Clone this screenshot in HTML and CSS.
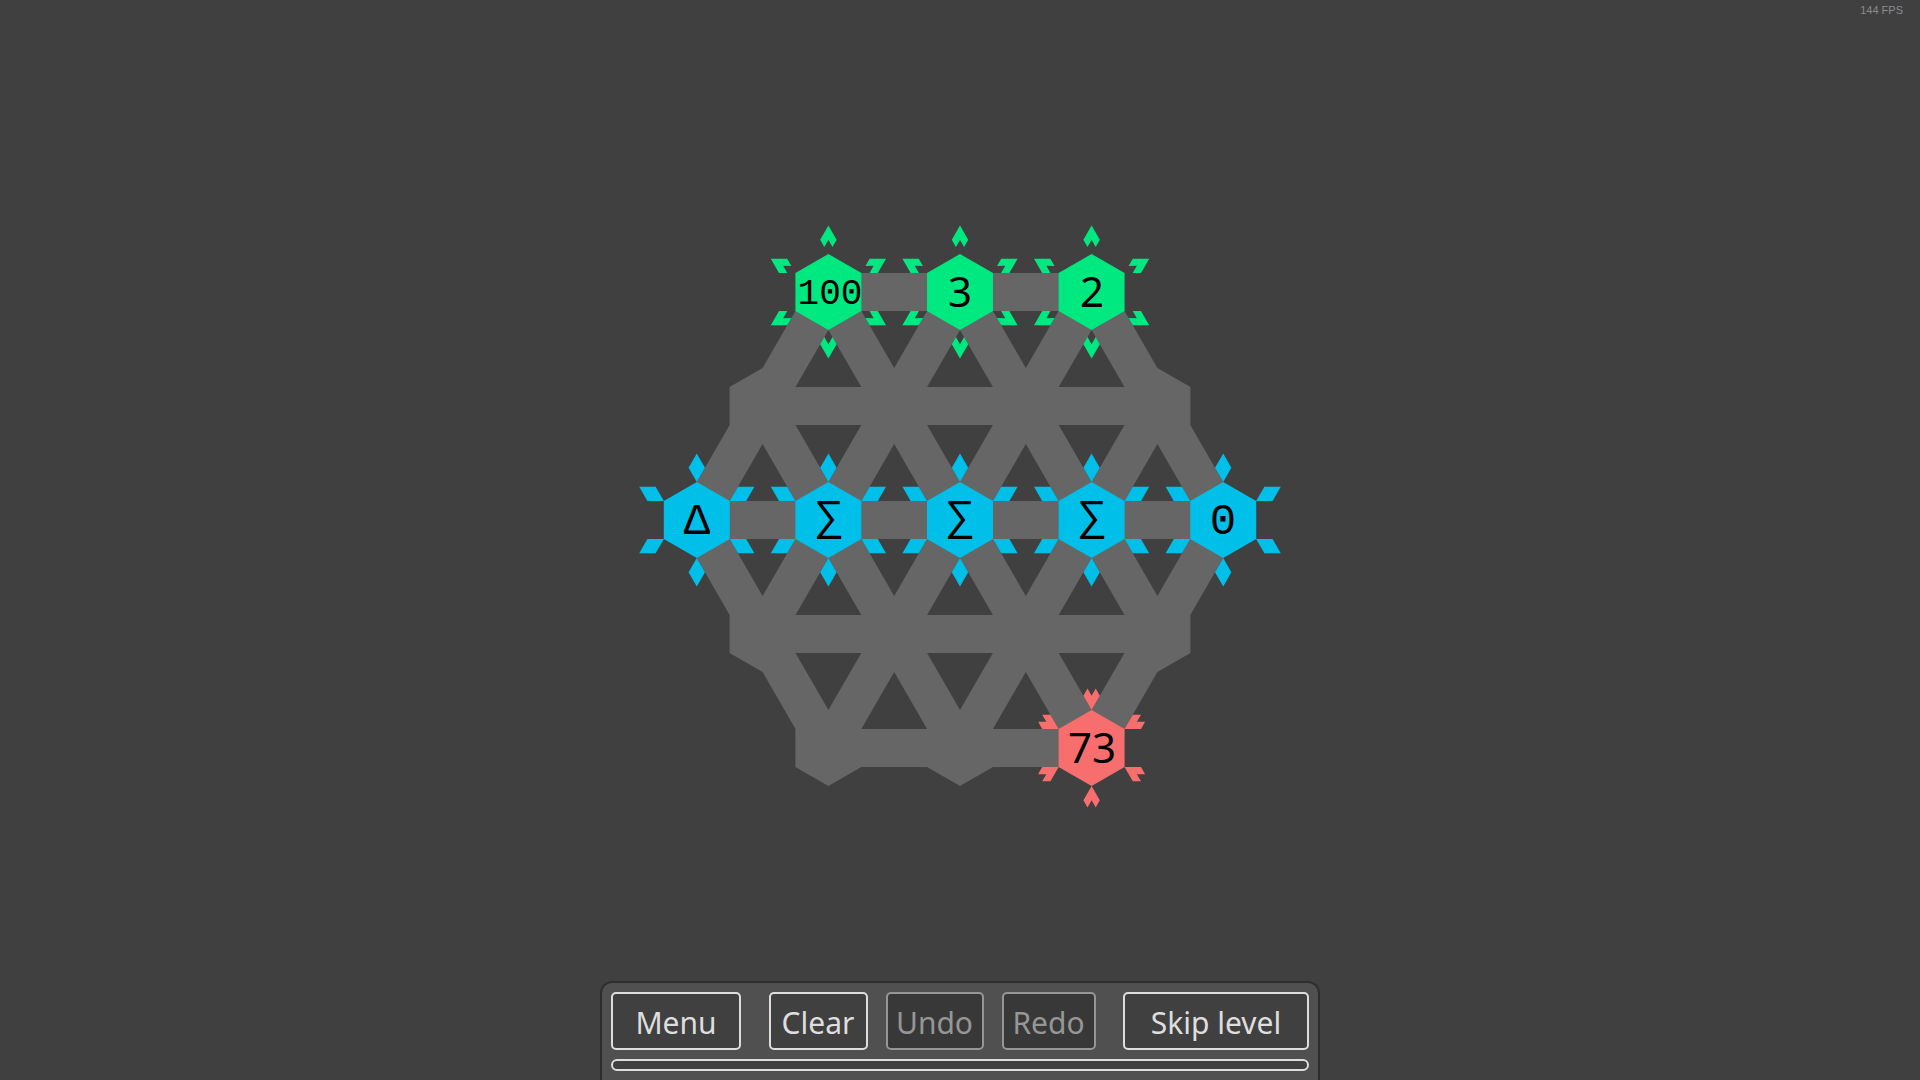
FILE: index.html
```html
<!DOCTYPE html>
<html lang="en">
<head>
    <meta charset="UTF-8">
    <meta name="viewport" content="width=device-width, initial-scale=1.0">
    <title>Hex Puzzle</title>
    <link rel="stylesheet" href="styles.css">
</head>
<body>
    <div class="fps">144 FPS</div>

    <main class="game">
        <svg class="board" viewBox="-330 -300 660 600" role="img" aria-label="Game board">
            <defs>
                <polygon id="hex" points="0,-38 33,-19 33,19 0,38 -33,19 -33,-19"/>

                <!-- one marker per kind of cell, pointing up -->
                <polygon id="arrow-out" points="0,-66.5 8.2,-52.3 4.1,-45.1 0,-52.3 -4.1,-45.1 -8.2,-52.3"/>
                <polygon id="arrow-both" points="0,-66.5 8.2,-52.3 0,-38 -8.2,-52.3"/>
                <polygon id="arrow-in" points="0,-38 8.2,-52.3 4.1,-59.4 0,-52.3 -4.1,-59.4 -8.2,-52.3"/>

                <g id="source">
                    <use href="#hex"/>
                    <use href="#arrow-out"/>
                    <use href="#arrow-out" transform="rotate(60)"/>
                    <use href="#arrow-out" transform="rotate(120)"/>
                    <use href="#arrow-out" transform="rotate(180)"/>
                    <use href="#arrow-out" transform="rotate(240)"/>
                    <use href="#arrow-out" transform="rotate(300)"/>
                </g>
                <g id="operator">
                    <use href="#hex"/>
                    <use href="#arrow-both"/>
                    <use href="#arrow-both" transform="rotate(60)"/>
                    <use href="#arrow-both" transform="rotate(120)"/>
                    <use href="#arrow-both" transform="rotate(180)"/>
                    <use href="#arrow-both" transform="rotate(240)"/>
                    <use href="#arrow-both" transform="rotate(300)"/>
                </g>
                <g id="target">
                    <use href="#hex"/>
                    <use href="#arrow-in"/>
                    <use href="#arrow-in" transform="rotate(60)"/>
                    <use href="#arrow-in" transform="rotate(120)"/>
                    <use href="#arrow-in" transform="rotate(180)"/>
                    <use href="#arrow-in" transform="rotate(240)"/>
                    <use href="#arrow-in" transform="rotate(300)"/>
                </g>
            </defs>

            <!-- paths between the cells -->
            <g class="paths">
                <path d="M-131.6-228H131.6M-197.4-114H197.4M-263.2 0H263.2M-197.4 114H197.4M-131.6 228H131.6"/>
                <path d="M-263.2 0L-131.6-228M-197.4 114L0-228M-131.6 228L131.6-228M0 228L197.4-114M131.6 228L263.2 0"/>
                <path d="M263.2 0L131.6-228M197.4 114L0-228M131.6 228L-131.6-228M0 228L-197.4-114M-131.6 228L-263.2 0"/>
            </g>

            <!-- empty cells -->
            <g class="empty">
                <use href="#hex" x="-197.4" y="-114"/>
                <use href="#hex" x="-65.8" y="-114"/>
                <use href="#hex" x="65.8" y="-114"/>
                <use href="#hex" x="197.4" y="-114"/>
                <use href="#hex" x="-197.4" y="114"/>
                <use href="#hex" x="-65.8" y="114"/>
                <use href="#hex" x="65.8" y="114"/>
                <use href="#hex" x="197.4" y="114"/>
                <use href="#hex" x="-131.6" y="228"/>
                <use href="#hex" x="0" y="228"/>
            </g>

            <g class="sources">
                <use href="#source" x="-131.6" y="-228"/>
                <use href="#source" x="0" y="-228"/>
                <use href="#source" x="131.6" y="-228"/>
            </g>
            <g class="operators">
                <use href="#operator" x="-263.2" y="0"/>
                <use href="#operator" x="-131.6" y="0"/>
                <use href="#operator" x="0" y="0"/>
                <use href="#operator" x="131.6" y="0"/>
                <use href="#operator" x="263.2" y="0"/>
            </g>
            <g class="targets">
                <use href="#target" x="131.6" y="228"/>
            </g>

            <g class="labels">
                <text class="small" x="-130" y="-216">100</text>
                <text x="0" y="-213">3</text>
                <text x="132" y="-213">2</text>
                <text class="mono" x="-263" y="14">Δ</text>
                <text class="sum" x="-131" y="10">∑</text>
                <text class="sum" x="0" y="10">∑</text>
                <text class="sum" x="132" y="10">∑</text>
                <text class="mono" x="263" y="14">0</text>
                <text x="132" y="243">73</text>
            </g>
        </svg>
    </main>

    <footer class="toolbar">
        <div class="buttons">
            <button class="menu">Menu</button>
            <div class="history">
                <button>Clear</button>
                <button disabled>Undo</button>
                <button disabled>Redo</button>
            </div>
            <button class="skip">Skip level</button>
        </div>
        <div class="progress"></div>
    </footer>
</body>
</html>
```
FILE: styles.css
```css
* {
    box-sizing: border-box;
}

body {
    margin: 0;
    min-height: 100vh;
    display: flex;
    flex-direction: column;
    align-items: center;
    background-color: #404040;
    color: #dedede;
    font-family: "Noto Sans", "Open Sans", sans-serif;
}

.fps {
    position: absolute;
    top: 4px;
    right: 17px;
    font-family: "Liberation Sans", Arial, sans-serif;
    font-size: 11px;
    line-height: 12px;
    color: #8c8c8c;
}

.game {
    flex: 1;
    width: 100%;
    padding-top: 59px;
    display: flex;
    justify-content: center;
    align-items: center;
}

.board {
    width: 660px;
    max-width: 100%;
}

.paths {
    fill: none;
    stroke: #666;
    stroke-width: 38;
}

.empty {
    fill: #666;
}

.sources {
    fill: #00e981;
}

.operators {
    fill: #00bfe8;
}

.targets {
    fill: #f76e6e;
}

.labels {
    fill: #000;
    font-family: "Noto Sans", sans-serif;
    font-size: 42px;
    text-anchor: middle;
}

.labels .mono,
.labels .small {
    font-family: "Liberation Mono", "Courier New", monospace;
    font-size: 44px;
}

.labels .small {
    font-size: 36px;
}

.labels .sum {
    font-family: "Liberation Sans", Arial, sans-serif;
}

.toolbar {
    width: 720px;
    max-width: 100%;
    padding: 9px;
    background-color: #505050;
    border: 2px solid #2e2e2e;
    border-bottom: none;
    border-radius: 12px 12px 0 0;
}

.buttons {
    display: flex;
    justify-content: space-between;
    margin-bottom: 9px;
}

.history {
    display: grid;
    grid-template-columns: 99px 98px 94px;
    gap: 18px;
}

button {
    height: 58px;
    padding: 4px 0 0;
    font-family: inherit;
    font-size: 30px;
    line-height: 40px;
    color: #dedede;
    background-color: #404040;
    border: 2px solid #dedede;
    border-radius: 5px;
    cursor: pointer;
}

button:disabled {
    color: #969696;
    background-color: #383838;
    border-color: #969696;
    cursor: default;
}

.menu {
    width: 130px;
}

.skip {
    width: 186px;
}

.progress {
    height: 12px;
    background-color: #404040;
    border: 2px solid #dedede;
    border-radius: 6px;
}
```
